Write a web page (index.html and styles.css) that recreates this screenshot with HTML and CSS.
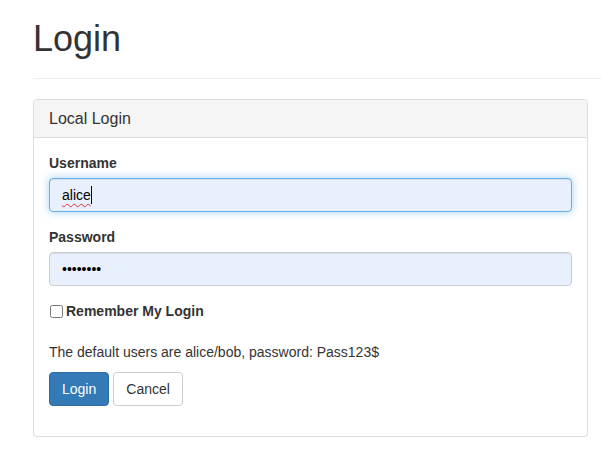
FILE: index.html
```html
<!DOCTYPE html>
<html>
<head>
<meta charset="utf-8">
<link rel="stylesheet" href="styles.css">
</head>
<body>
<div class="login-page">
  <div class="page-header">
    <h1>Login</h1>
  </div>
  <div class="panel">
    <div class="panel-heading">Local Login</div>
    <div class="panel-body">
      <div class="form-group">
        <label class="label">Username</label>
        <div class="form-control focused"><span class="typo">alice</span><span class="caret"></span></div>
      </div>
      <div class="form-group">
        <label class="label">Password</label>
        <input class="form-control pw" type="password" value="12345678">
      </div>
      <div class="checkbox">
        <input type="checkbox" class="cb">
        <span class="label">Remember My Login</span>
      </div>
      <p class="hint">The default users are alice/bob, password: Pass123$</p>
      <div class="buttons">
        <button class="btn btn-primary">Login</button>
        <button class="btn btn-default">Cancel</button>
      </div>
    </div>
  </div>
</div>
</body>
</html>
```

FILE: styles.css
```css
* { box-sizing: border-box; }
html, body {
  margin: 0;
  padding: 0;
  background: #fff;
}
body {
  font-family: "Liberation Sans", Arial, Helvetica, sans-serif;
  font-size: 14px;
  line-height: 20px;
  color: #333;
}
.login-page {
  padding-left: 33px;
}
.page-header {
  padding-bottom: 9px;
  margin: 0 0 20px;
  border-bottom: 1px solid #eee;
}
.page-header h1 {
  margin: 19px 0 10px;
  font-size: 36px;
  font-weight: 500;
  line-height: 1.1;
  color: #333;
}
.panel {
  width: 555px;
  border: 1px solid #ddd;
  border-radius: 4px;
  background: #fff;
  box-shadow: 0 1px 1px rgba(0,0,0,.05);
}
.panel-heading {
  padding: 10px 15px;
  font-size: 16px;
  line-height: 1.1;
  background: #f5f5f5;
  border-bottom: 1px solid #ddd;
  border-radius: 3px 3px 0 0;
  color: #333;
}
.panel-body {
  padding: 15px;
}
.form-group {
  margin-bottom: 15px;
}
.label {
  display: block;
  font-weight: bold;
  margin-bottom: 5px;
}
.form-control {
  display: block;
  width: 100%;
  height: 34px;
  padding: 6px 12px;
  font-family: inherit;
  font-size: 14px;
  line-height: 20px;
  color: #000;
  background-color: #e8f0fe;
  border: 1px solid #ccc;
  border-radius: 4px;
  box-shadow: inset 0 1px 1px rgba(0,0,0,.075);
  outline: none;
}
.focused {
  border-color: #66afe9;
  box-shadow: inset 0 1px 1px rgba(0,0,0,.075), 0 0 8px rgba(102,175,233,.6);
}
.typo {
  text-decoration: underline wavy #e0312f;
  text-decoration-thickness: 1px;
  text-underline-offset: 3px;
}
.caret {
  display: inline-block;
  width: 1px;
  height: 18px;
  background: #000;
  vertical-align: -4px;
}
.checkbox {
  display: flex;
  align-items: center;
  gap: 3px;
  margin: 1px 0 0;
  min-height: 20px;
}
.checkbox .label {
  margin: 0;
}
.cb {
  width: 13px;
  height: 13px;
  margin: 0 0 0 1px;
}
.hint {
  margin: 21px 0 10px;
}
.buttons {
  display: flex;
  gap: 4px;
  margin-bottom: 15px;
}
.btn {
  display: inline-block;
  padding: 6px 12px;
  font-family: inherit;
  font-size: 14px;
  line-height: 20px;
  border: 1px solid transparent;
  border-radius: 4px;
  cursor: pointer;
}
.btn-primary {
  color: #fff;
  background: #337ab7;
  border-color: #2e6da4;
}
.btn-default {
  color: #333;
  background: #fff;
  border-color: #ccc;
}
```
